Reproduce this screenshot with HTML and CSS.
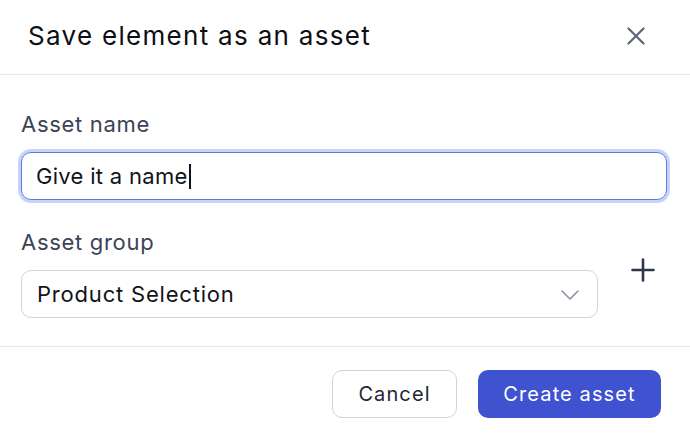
FILE: index.html
```html
<!DOCTYPE html>
<html lang="en">
<head>
<meta charset="utf-8">
<title>Save element as an asset</title>
<link rel="stylesheet" href="styles.css">
</head>
<body>
<div class="dialog">
  <header class="header">
    <h1 class="title">Save element as an asset</h1>
    <button class="close" aria-label="Close">
      <svg width="18" height="18" viewBox="0 0 18 18"><path d="M1.5 1.5 L16.5 16.5 M16.5 1.5 L1.5 16.5" stroke="#5f6675" stroke-width="2.2" stroke-linecap="round" fill="none"/></svg>
    </button>
  </header>
  <main class="body">
    <div class="field">
      <label class="label">Asset name</label>
      <div class="input focused" role="textbox">Give it a name<span class="caret"></span></div>
    </div>
    <div class="field">
      <label class="label">Asset group</label>
      <div class="row">
        <div class="select">
          <span>Product Selection</span>
          <svg class="chev" width="18" height="10" viewBox="0 0 18 10"><path d="M1 1 L9 9 L17 1" stroke="#8a909c" stroke-width="1.6" fill="none" stroke-linecap="round" stroke-linejoin="round"/></svg>
        </div>
        <button class="plus" aria-label="Add group">
          <svg width="24" height="24" viewBox="0 0 24 24"><path d="M12 1.5 V22.5 M1.5 12 H22.5" stroke="#2d3648" stroke-width="2.6" stroke-linecap="round" fill="none"/></svg>
        </button>
      </div>
    </div>
  </main>
  <footer class="footer">
    <button class="btn btn-secondary">Cancel</button>
    <button class="btn btn-primary">Create asset</button>
  </footer>
</div>
</body>
</html>
```
FILE: styles.css
```css
* { box-sizing: border-box; }
html, body {
  margin: 0;
  background: #ffffff;
  font-family: Inter, "Liberation Sans", sans-serif;
}
.dialog {
  width: 690px;
  height: 433px;
  display: flex;
  flex-direction: column;
}
.header {
  height: 75px;
  border-bottom: 1px solid #e4e6ea;
  display: flex;
  align-items: center;
  justify-content: space-between;
  padding: 0 45px 3px 28px;
}
.title {
  margin: 0;
  font-size: 26px;
  font-weight: 400;
  color: #0d0f14;
  letter-spacing: 1.3px;
}
.close {
  border: 0;
  background: none;
  padding: 0;
  width: 18px;
  height: 18px;
  display: flex;
}
.body {
  padding: 36px 23px 28px 21px;
  display: flex;
  flex-direction: column;
  gap: 29px;
}
.field {
  display: flex;
  flex-direction: column;
  gap: 15px;
}
.label {
  font-size: 22px;
  line-height: 26px;
  color: #3a4456;
  letter-spacing: 0.7px;
}
.input {
  height: 48px;
  border: 1.5px solid #5a7ae2;
  border-radius: 10px;
  box-shadow: 0 0 0 3px #c9d3f7;
  padding: 0 14px;
  display: flex;
  align-items: center;
  font-size: 22px;
  color: #111318;
  letter-spacing: 0.3px;
}
.caret {
  display: inline-block;
  width: 2px;
  height: 25px;
  background: #111318;
  margin-left: 1px;
}
.row {
  display: flex;
  align-items: flex-start;
}
.select {
  flex: 0 0 577px;
  height: 48px;
  border: 1px solid #cfd4dc;
  border-radius: 10px;
  display: flex;
  align-items: center;
  justify-content: space-between;
  padding: 0 18px 0 15px;
  font-size: 22px;
  color: #111318;
  letter-spacing: 0.8px;
}
.chev { margin-top: 2px; }
.plus {
  border: 0;
  background: none;
  padding: 0;
  margin: -12px 0 0 33px;
  width: 24px;
  height: 24px;
  display: flex;
}
.footer {
  border-top: 1px solid #e4e6ea;
  display: flex;
  justify-content: flex-end;
  gap: 21px;
  padding: 23px 29px 0 0;
}
.btn {
  height: 48px;
  border-radius: 10px;
  font-family: Inter, "Liberation Sans", sans-serif;
  font-size: 20px;
  letter-spacing: 1.1px;
  padding: 0;
}
.btn-secondary {
  width: 125px;
  background: #ffffff;
  border: 1px solid #cdd3dd;
  color: #1f2635;
}
.btn-primary {
  width: 183px;
  background: #3f52cf;
  border: 0;
  color: #ffffff;
}
```
